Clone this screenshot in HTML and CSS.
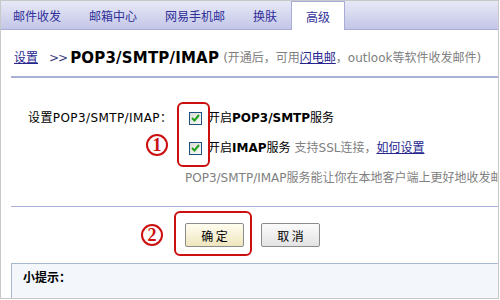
FILE: index.html
```html
<!DOCTYPE html>
<html lang="zh-CN">
<head>
	<meta charset="utf-8" />
	<title>POP3/SMTP/IMAP</title>
	<link rel="stylesheet" href="styles.css">
</head>
<body>
	<div class="frame">
		<div class="tabs">
			<a class="tab first">邮件收发</a>
			<a class="tab">邮箱中心</a>
			<a class="tab">网易手机邮</a>
			<a class="tab">换肤</a>
			<a class="tab active">高级</a>
		</div>

		<div class="content">
			<div class="crumb">
				<a class="link">设置</a>
				<span class="sep">&gt;&gt;</span>
				<b class="title">POP3/SMTP/IMAP</b>
				<span class="note">(开通后，可用<a class="link">闪电邮</a>，outlook等软件收发邮件)</span>
			</div>

			<div class="settings">
				<div class="label">设置POP3/SMTP/IMAP：</div>
				<div class="opts">
					<span class="mark mark-opts"></span>
					<span class="num num-1">1</span>
					<div class="opt">
						<span class="cb"><svg width="9" height="8" viewBox="0 0 9 8"><path d="M1 4 L3.5 6.5 L8 1" fill="none" stroke="#1fa01f" stroke-width="2"/></svg></span>
						开启<b>POP3/SMTP</b>服务
					</div>
					<div class="opt">
						<span class="cb"><svg width="9" height="8" viewBox="0 0 9 8"><path d="M1 4 L3.5 6.5 L8 1" fill="none" stroke="#1fa01f" stroke-width="2"/></svg></span>
						开启<b>IMAP</b>服务 <span class="grey">支持SSL连接，</span><a class="link">如何设置</a>
					</div>
					<div class="desc">POP3/SMTP/IMAP服务能让你在本地客户端上更好地收发邮件</div>
				</div>
			</div>

			<div class="actions">
				<div class="ok-wrap">
					<span class="mark mark-ok"></span>
					<span class="num num-2">2</span>
					<button class="btn btn-ok">确 定</button>
				</div>
				<button class="btn">取 消</button>
			</div>

			<div class="tips">
				<b>小提示：</b>
			</div>
		</div>
	</div>
</body>
</html>
```

FILE: styles.css
```css
:root {
	--tab-text: #2f2f9a;
	--line: #aab0d8;
	--red: #cc0f0f;
	--grey: #808080;
}

* {
	box-sizing: border-box;
	margin: 0;
	padding: 0;
}

body {
	background: #fff;
	color: #000;
	font-family: "DejaVu Sans", "Noto Sans CJK SC", sans-serif;
	font-size: 12px;
}

.frame {
	width: 499px;
	height: 299px;
	border: 1px solid #c8c8c8;
	overflow: hidden;
}

.tabs {
	display: flex;
	height: 29px;
	margin-left: -1px;
	background: linear-gradient(#e8e9f7, #c3c6e6);
	border-bottom: 1px solid #a9acd6;
}

.tab {
	display: flex;
	align-items: center;
	padding: 0 14px;
	color: var(--tab-text);
	cursor: pointer;
}

.tab.first {
	padding-left: 13px;
}

.tab.active {
	background: #fff;
	border: 1px solid #a9acd6;
	border-bottom: none;
	height: 29px;
	padding: 0 14px;
}

.content {
	width: 540px;
	padding-left: 10px;
}

.link {
	color: #26268f;
	text-decoration: underline;
	cursor: pointer;
}

.crumb {
	display: flex;
	align-items: center;
	height: 48px;
	padding-top: 10px;
	border-bottom: 2px solid var(--line);
	line-height: 20px;
	white-space: nowrap;
}

.crumb > .link {
	margin-left: 3px;
}

.sep {
	margin: 0 3px 0 11px;
	color: #3a3a7a;
	letter-spacing: -1px;
}

.title {
	font-size: 15px;
	letter-spacing: 0.2px;
}

.note {
	margin-left: 4px;
	color: var(--grey);
}

.settings {
	display: flex;
	padding: 30px 0 18px 17px;
	border-bottom: 1px solid var(--line);
	line-height: 20px;
	white-space: nowrap;
}

.label {
	flex-shrink: 0;
	width: 161px;
	letter-spacing: 0.4px;
}

.opts {
	position: relative;
	display: flex;
	flex-direction: column;
	gap: 10px;
}

.opt {
	display: flex;
	align-items: center;
}

.cb {
	display: inline-flex;
	align-items: center;
	justify-content: center;
	width: 13px;
	height: 13px;
	margin-right: 6px;
	border: 1px solid #1c5180;
	background: linear-gradient(135deg, #dcdcd6, #fbfbf9);
}

.grey {
	margin-left: 4px;
	color: var(--grey);
}

.desc {
	margin-left: -4px;
	color: var(--grey);
}

.mark {
	position: absolute;
	border: 2px solid var(--red);
	border-radius: 6px;
}

.mark-opts {
	left: -12px;
	top: -6px;
	width: 33px;
	height: 65px;
}

.num {
	position: absolute;
	display: flex;
	align-items: center;
	justify-content: center;
	width: 22px;
	height: 22px;
	border: 2px solid var(--red);
	border-radius: 50%;
	color: var(--red);
	font-family: "Liberation Serif", serif;
	font-size: 18px;
	font-weight: bold;
	line-height: 1;
}

.num-1 {
	left: -43px;
	top: 26px;
}

.actions {
	display: flex;
	align-items: center;
	gap: 17px;
	padding: 16px 0 16px 174px;
}

.ok-wrap {
	position: relative;
	display: flex;
}

.mark-ok {
	left: -11px;
	top: -12px;
	width: 78px;
	height: 45px;
}

.num-2 {
	left: -44px;
	top: 1px;
}

.btn {
	width: 59px;
	height: 24px;
	border: 1px solid #8c8c8c;
	border-radius: 2px;
	background: linear-gradient(#fbfbfb, #e3e3e3);
	font-family: "Noto Sans CJK SC", sans-serif;
	font-size: 12px;
	color: #000;
	cursor: pointer;
}

.btn-ok {
	background: linear-gradient(#fffdf0, #efe6bd);
}

.tips {
	height: 60px;
	padding: 4px 0 0 11px;
	border: 1px solid #a6b8cd;
	background: #f3f7fb;
	line-height: 20px;
}
```
